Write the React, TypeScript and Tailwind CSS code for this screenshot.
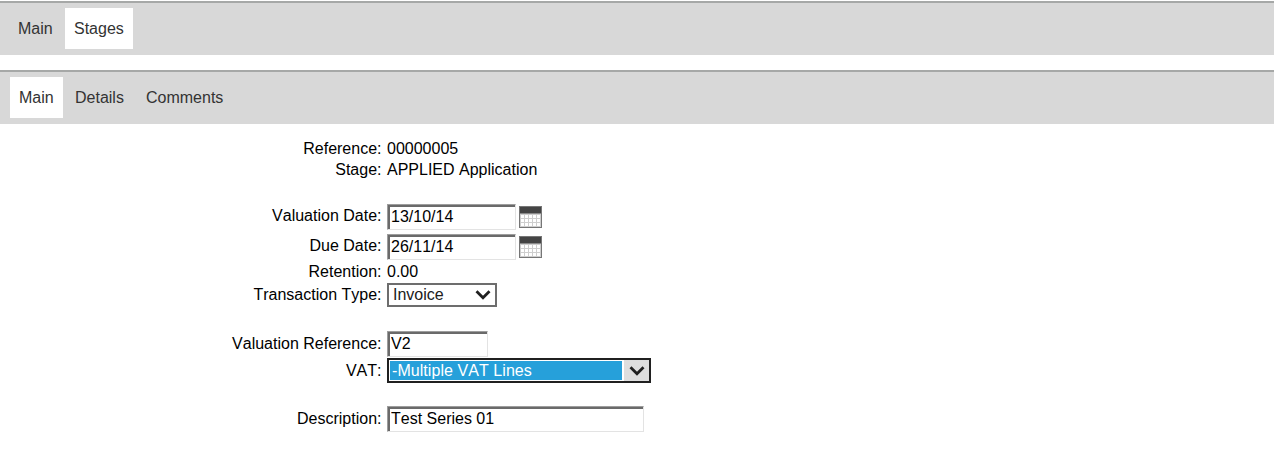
import type { ReactNode } from "react";

function TabBar({ children, className }: { children: ReactNode; className: string }) {
  return (
    <nav className={`flex h-[54px] items-start border-t-2 border-[#a6a8a7] bg-[#d8d8d8] pt-[5px] ${className}`}>
      {children}
    </nav>
  );
}

function Tab({ label, active, className }: { label: string; active?: boolean; className: string }) {
  return (
    <button
      className={`h-[41px] shrink-0 whitespace-nowrap pl-[9px] text-left text-[#333333] ${active ? "bg-white" : ""} ${className}`}
    >
      {label}
    </button>
  );
}

function Row({ label, className, children }: { label: string; className: string; children: ReactNode }) {
  return (
    <div className={`flex items-start leading-[20px] ${className}`}>
      <label className="mr-[5px] w-[382px] shrink-0 pr-[0.5px] text-right">{label}</label>
      {children}
    </div>
  );
}

function Field({ value, className }: { value: string; className: string }) {
  return (
    <div className={`border border-t-[#9d9d9d] border-r-[#e3e3e3] border-b-[#e3e3e3] border-l-[#9d9d9d] ${className}`}>
      <input
        defaultValue={value}
        className="block h-full w-full border-t-2 border-l-2 border-[#6a6a6a] bg-white pb-[3px] pl-px outline-none"
      />
    </div>
  );
}

function CalendarIcon() {
  return (
    <svg className="ml-[3px] block h-[22px] w-[23px]" viewBox="0 0 23 22" shapeRendering="crispEdges">
      <rect width="23" height="22" fill="#767676" />
      <rect x="1" y="1" width="21" height="6" fill="#444444" />
      <rect x="1" y="7" width="21" height="1" fill="#8a8a8a" />
      <rect x="1" y="8" width="21" height="13" fill="#cecece" />
      {[9, 13, 17].map((y) =>
        [2, 6, 10, 14, 18].map((x) => <rect key={`${x}-${y}`} x={x} y={y} width="3" height="3" fill="#ffffff" />),
      )}
    </svg>
  );
}

function Chevron() {
  return (
    <svg className="h-[10px] w-[16px]" viewBox="0 0 16 10" fill="none">
      <path d="M1.5 1.2L8 7.7L14.5 1.2" stroke="#202020" strokeWidth="2.8" />
    </svg>
  );
}

export default function App() {
  return (
    <main
      className="h-[449px] w-full overflow-hidden bg-white pt-px text-[16px] text-black [font-kerning:none]"
      style={{ fontFamily: '"Liberation Sans", Arial, sans-serif' }}
    >
      <TabBar className="pl-[9px]">
        <Tab label="Main" className="mr-[3px] w-[53px]" />
        <Tab label="Stages" active className="w-[68px]" />
      </TabBar>
      <TabBar className="mt-[15px] pl-[10px]">
        <Tab label="Main" active className="mr-[3px] w-[53px]" />
        <Tab label="Details" className="mr-[3px] w-[68px]" />
        <Tab label="Comments" className="w-[98px]" />
      </TabBar>
      <form className="pt-[15px]">
        <Row label="Reference:" className="h-[21px]">00000005</Row>
        <Row label="Stage:" className="h-[46px]">APPLIED Application</Row>
        <Row label="Valuation Date:" className="h-[30px]">
          <Field value="13/10/14" className="-mt-[2px] h-[26px] w-[129px]" />
          <CalendarIcon />
        </Row>
        <Row label="Due Date:" className="h-[26px]">
          <Field value="26/11/14" className="-mt-[2px] h-[26px] w-[129px]" />
          <CalendarIcon />
        </Row>
        <Row label="Retention:" className="h-[23px]">0.00</Row>
        <Row label="Transaction Type:" className="h-[49px]">
          <div className="-mt-[2px] flex h-[24px] w-[110px] items-center justify-between border-2 border-[#6d6d6d] pr-[4px] pl-[4px] text-[#202020]">
            Invoice
            <Chevron />
          </div>
        </Row>
        <Row label="Valuation Reference:" className="h-[27px]">
          <Field value="V2" className="-mt-[3px] h-[26px] w-[101px]" />
        </Row>
        <Row label="VAT:" className="h-[48px]">
          <div className="-mt-[3px] flex h-[25px] w-[264px] border-2 border-[#202020]">
            <div className="mt-px ml-px h-[19px] w-[232px] bg-[#26a0da] pl-[2px] leading-[19px] tracking-[0.06px] text-white">-Multiple VAT Lines</div>
            <div className="ml-[2px] flex flex-1 items-center justify-center bg-[#dedede]">
              <Chevron />
            </div>
          </div>
        </Row>
        <Row label="Description:" className="h-[27px]">
          <Field value="Test Series 01" className="-mt-[3px] h-[26px] w-[257px]" />
        </Row>
      </form>
    </main>
  );
}
